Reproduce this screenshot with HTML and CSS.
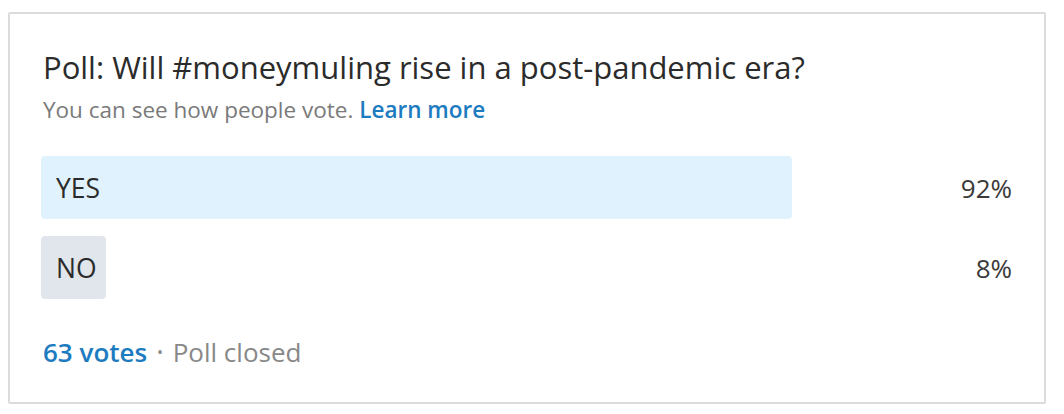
FILE: index.html
```html
<!DOCTYPE html>
<html lang="en">
<head>
    <meta charset="UTF-8">
    <title>Poll</title>
    <link rel="stylesheet" href="styles.css">
</head>
<body>
    <div class="poll">
        <h2 class="poll-title">Poll: Will #moneymuling rise in a post-pandemic era?</h2>
        <p class="poll-note">You can see how people vote. <a href="#">Learn more</a></p>

        <div class="option">
            <div class="track">
                <div class="bar bar-win" style="width: 92%"></div>
                <span class="label">YES</span>
            </div>
            <span class="pct">92%</span>
        </div>
        <div class="option">
            <div class="track">
                <div class="bar" style="width: 8%"></div>
                <span class="label">NO</span>
            </div>
            <span class="pct">8%</span>
        </div>

        <p class="poll-footer"><a href="#">63 votes</a> <span class="dot">•</span> Poll closed</p>
    </div>
</body>
</html>
```

FILE: styles.css
```css
body {
    margin: 0;
    font-family: "Open Sans", "Noto Sans", Arial, sans-serif;
    background: #fff;
    color: #333;
}
.poll {
    margin: 12px 0 0 8px;
    width: 1038px;
    height: 392px;
    box-sizing: border-box;
    border: 2px solid #dcdcdc;
    border-radius: 2px;
    padding: 33px 32px 0 31px;
}
.poll-title {
    margin: 0 0 0 2px;
    font-size: 31px;
    line-height: 40px;
    font-weight: 400;
    color: #2b2b2b;
    white-space: nowrap;
}
.poll-note {
    margin: 9px 0 0 2px;
    font-size: 22.5px;
    line-height: 28px;
    color: #7a7a7a;
}
.poll-note a {
    color: #1d7bbf;
    font-weight: 600;
    text-decoration: none;
}
.option {
    display: flex;
    align-items: center;
    margin-top: 17px;
}
.option:first-of-type {
    margin-top: 32px;
}
.track {
    position: relative;
    width: 816px;
    height: 63px;
    display: flex;
    align-items: center;
}
.bar {
    position: absolute;
    left: 0;
    top: 0;
    bottom: 0;
    background: #e1e6ed;
    border-radius: 4px;
}
.bar-win {
    background: #e0f2fd;
}
.label {
    position: relative;
    padding-left: 15px;
    font-size: 26.5px;
    color: #2b2b2b;
}
.pct {
    flex: 1;
    text-align: right;
    font-size: 26px;
    color: #3a3a3a;
}
.poll-footer {
    margin: 36px 0 0 2px;
    font-size: 26px;
    line-height: 34px;
    color: #888;
}
.poll-footer a {
    color: #1d7bbf;
    font-weight: 600;
    text-decoration: none;
}
.dot {
    margin: 0 3px;
    font-size: 16px;
    vertical-align: 4px;
}
```
